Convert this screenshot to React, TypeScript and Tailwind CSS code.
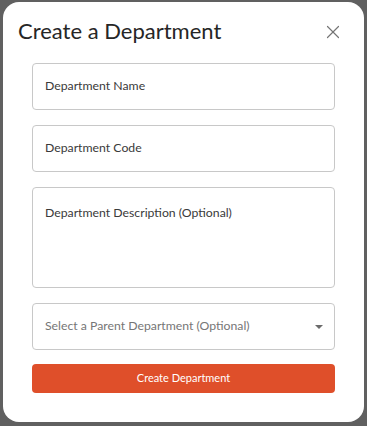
import { X } from "lucide-react";

export default function App() {
  return (
    <div className="w-[367px] h-[426px] bg-[#606060] pt-[2px] pl-[3px] font-['Lato','Noto_Sans',sans-serif]">
      <div className="w-[361px] h-[420px] bg-white rounded-[16px] px-[15px] pt-[12px]">
        {/* Header */}
        <div className="flex items-start justify-between h-[32px]">
          <h2 className="text-[22px] leading-none text-[#262626] mt-[6px]">Create a Department</h2>
          <button className="mr-[5px] mt-[7px] text-[#757575]">
            <X className="h-[22px] w-[22px]" strokeWidth={1.3} />
          </button>
        </div>

        {/* Form */}
        <div className="flex flex-col gap-[15px] mt-[17px] px-[14px]">
          <div className="h-[47px] border border-[#c8c8c8] rounded-[4px] flex items-center px-[12px] text-[12.25px] text-[#3a3a3a]">
            Department Name
          </div>
          <div className="h-[47px] border border-[#c8c8c8] rounded-[4px] flex items-center px-[12px] text-[12.25px] text-[#3a3a3a]">
            Department Code
          </div>
          <div className="h-[101px] border border-[#c8c8c8] rounded-[4px] px-[12px] pt-[16px] text-[12.25px] text-[#3a3a3a]">
            Department Description (Optional)
          </div>
          <div className="h-[47px] border border-[#c8c8c8] rounded-[4px] flex items-center justify-between pl-[12px] pr-[11px] text-[12.25px] text-[#767676]">
            <span>Select a Parent Department (Optional)</span>
            <svg width="8" height="4" viewBox="0 0 8 4">
              <path d="M0 0h8L4 4z" fill="#6b6b6b" />
            </svg>
          </div>
          <button className="h-[29px] rounded-[4px] bg-[#df4f2a] text-white text-[11px] -mt-[1px]">
            Create Department
          </button>
        </div>
      </div>
    </div>
  );
}
